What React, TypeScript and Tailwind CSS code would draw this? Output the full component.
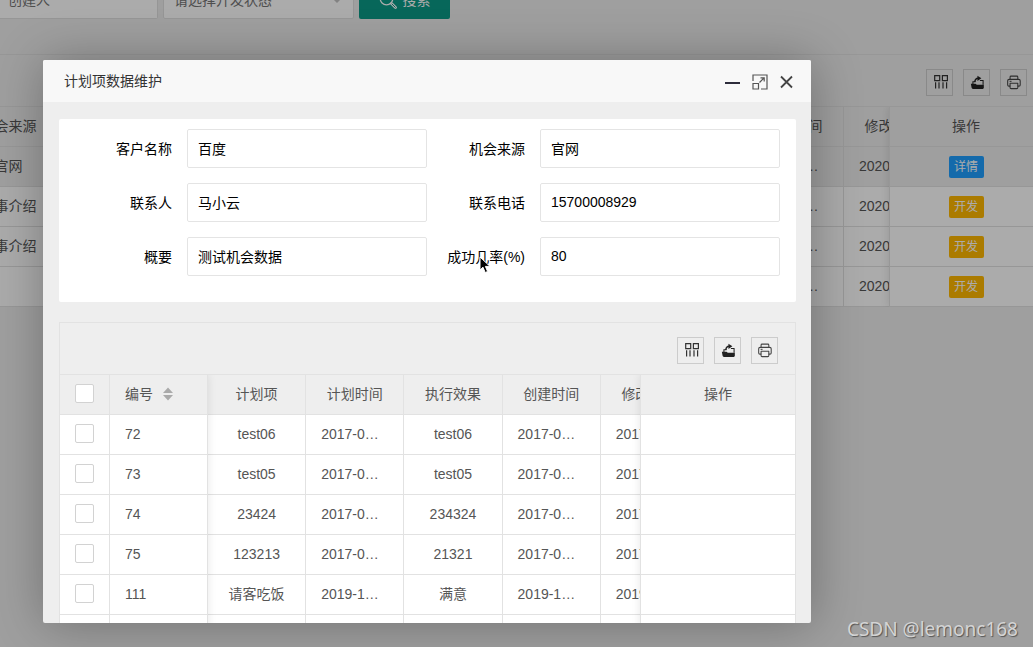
import React from "react";

const sans = "font-['Liberation_Sans','Noto_Sans_CJK_SC',sans-serif]";

function ColumnsIcon() {
  return (
    <svg className="size-4" viewBox="0 0 16 16" fill="none" stroke="#333" strokeWidth="1.2">
      <path d="M1.7 1.6h5v5h-5zM9.4 1.6h5v5h-5z" />
      <path d="M2.6 8.2v6.3M6 8.2v6.3M10 8.2v6.3M13.6 8.2v6.3" />
    </svg>
  );
}

function ExportIcon() {
  return (
    <svg className="size-4" viewBox="0.3 -0.9 17 17" fill="none" stroke="#222" strokeWidth="1.1">
      <path d="M3.4 10V7.4h2.800M10.800 6h3.400v4.500" />
      <path d="M5.400 7.600c.2-2.500 1.400-3.800 3.600-3.900" strokeWidth="1.5" />
      <path d="M8.2 0.900l4.200 2.800-4.200 2.800z" fill="#222" stroke="none" />
      <path d="M1.2 9.400h5l1.300 1.200h7.500v3.200q0 1.200-1.200 1.200H3.400q-1.200 0-1.400-1.200z" fill="#222" stroke="none" />
    </svg>
  );
}

function PrintIcon() {
  return (
    <svg className="size-4" viewBox="0.8 -0.6 16.6 16.6" fill="none" stroke="#444" strokeWidth="1.1" strokeLinejoin="round">
      <path d="M4 5V2.6q0-1 1-1h6q1 0 1 1V5" />
      <path d="M4 12H2.8Q1.500 12 1.500 10.700V6.500Q1.500 5 3 5h10q1.500 0 1.500 1.500v4.200q0 1.300-1.300 1.300H12" />
      <path d="M4 9h8v4.600q0 1-1 1H5q-1 0-1-1z" />
      <path d="M3.500 7h2" />
    </svg>
  );
}

function Toolbar() {
  const tools = [
    { label: "筛选列", icon: <ColumnsIcon /> },
    { label: "导出", icon: <ExportIcon /> },
    { label: "打印", icon: <PrintIcon /> },
  ];
  return (
    <div className="flex h-[51px] items-center justify-end gap-2.5 pr-[17px] pt-[3px]">
      {tools.map((t) => (
        <button key={t.label} aria-label={t.label} className="flex size-[27px] items-center justify-center border border-[#ccc] pl-0.5">
          {t.icon}
        </button>
      ))}
    </div>
  );
}

const cell = "h-10 overflow-hidden whitespace-nowrap border-b border-r border-[#e2e2e2] px-[15px] pb-0.5 font-normal";
const lastHead = "h-10 border-b border-[#e2e2e2] pb-0.5 font-normal";
const lastCell = "h-10 border-b border-[#e2e2e2]";
const tableBase = "table-fixed border-separate border-spacing-0 text-sm text-[#555]";

const opportunities = [
  { source: "官网", action: "详情" },
  { source: "同事介绍", action: "开发" },
  { source: "同事介绍", action: "开发" },
  { source: "", action: "开发" },
];

function OpportunityPage() {
  return (
    <div className="h-full overflow-hidden bg-[#eee]">
      <form className="flex h-[19px] items-end gap-[5px] overflow-hidden text-sm">
        <input aria-label="创建人" placeholder="创建人" className="h-[38px] w-[158px] shrink-0 rounded-r-xs border border-l-0 border-[#e0e0e0] bg-white px-2 placeholder:text-[#757575]" />
        <div className="flex h-[38px] w-[191px] shrink-0 items-center rounded-xs border border-[#e0e0e0] bg-white pr-2.5">
          <select aria-label="开发状态" className="h-full flex-1 appearance-none pl-2.5 text-[#757575]">
            <option>请选择开发状态</option>
          </select>
          <svg className="h-1.5 w-3" viewBox="0 0 12 6" fill="#c2c2c2"><path d="M0 0h12L6 6z" /></svg>
        </div>
        <button type="button" className="flex h-[38px] w-[91px] shrink-0 items-center justify-center gap-1.5 rounded-xs bg-[#0b9a86] text-white">
          <svg className="size-[18px]" viewBox="0 0 18 18" fill="none" stroke="currentColor">
            <circle cx="7.500" cy="7.500" r="6.300" strokeWidth="1.300" />
            <path d="M12.500 12.500l4 4" strokeWidth="2.800" strokeLinecap="round" />
            <path d="M13 13l3.300 3.300" stroke="#0b9a86" strokeLinecap="round" />
          </svg>
          搜索
        </button>
      </form>
      <section className="-mr-[11px] mt-[35px] border-t border-[#e2e2e2]">
        <Toolbar />
        <div className="flex overflow-hidden border-t border-[#e2e2e2]">
          <div className="min-w-0 flex-1 overflow-hidden">
            <table className={`${tableBase} -ml-[40px] w-[982px]`}>
              <colgroup>
                <col className="w-[98px]" />
                <col />
                <col className="w-[98px]" />
                <col className="w-[98px]" />
              </colgroup>
              <thead>
                <tr>
                  <th className={cell}>机会来源</th>
                  <th className={cell}></th>
                  <th className={cell}>创建时间</th>
                  <th className={cell}>修改时间</th>
                </tr>
              </thead>
              <tbody>
                {opportunities.map((o, i) => (
                  <tr key={i} className={i === 0 ? "" : "bg-white"}>
                    <td className={`${cell} text-center`}>{o.source}</td>
                    <td className={cell}></td>
                    <td className={cell}>2020-0…</td>
                    <td className={cell}>2020-0…</td>
                  </tr>
                ))}
              </tbody>
            </table>
          </div>
          <div className="w-[155px] shrink-0 border-l border-[#e2e2e2] bg-[#eee] pr-0.5 shadow-[-1px_0_8px_rgba(0,0,0,0.1)]">
            <table className={`${tableBase} w-full`}>
              <thead>
                <tr><th className={lastHead}>操作</th></tr>
              </thead>
              <tbody>
                {opportunities.map((o, i) => (
                  <tr key={i} className={i === 0 ? "" : "bg-white"}>
                    <td className={lastCell}>
                      <div className="flex justify-center">
                        <button className={`h-[22px] w-[35px] rounded-xs text-xs text-white ${o.action === "详情" ? "bg-[#1e9fff]" : "bg-[#ffb800]"}`}>{o.action}</button>
                      </div>
                    </td>
                  </tr>
                ))}
              </tbody>
            </table>
          </div>
        </div>
      </section>
    </div>
  );
}

const fields = [
  { id: "customer", label: "客户名称", value: "百度" },
  { id: "source", label: "机会来源", value: "官网" },
  { id: "contact", label: "联系人", value: "马小云" },
  { id: "phone", label: "联系电话", value: "15700008929" },
  { id: "summary", label: "概要", value: "测试机会数据" },
  { id: "rate", label: "成功几率(%)", value: "80" },
];

const plans = [
  { id: "72", item: "test06", time: "2017-0…", result: "test06", created: "2017-0…", updated: "2017-0…" },
  { id: "73", item: "test05", time: "2017-0…", result: "test05", created: "2017-0…", updated: "2017-0…" },
  { id: "74", item: "23424", time: "2017-0…", result: "234324", created: "2017-0…", updated: "2017-0…" },
  { id: "75", item: "123213", time: "2017-0…", result: "21321", created: "2017-0…", updated: "2017-0…" },
  { id: "111", item: "请客吃饭", time: "2019-1…", result: "满意", created: "2019-1…", updated: "2019-1…" },
  { id: "", item: "", time: "", result: "", created: "", updated: "" },
];

function Check({ label }: { label: string }) {
  return <input type="checkbox" aria-label={label} className="block size-[19px] appearance-none rounded-xs border border-[#d2d2d2] bg-white" />;
}

function PlanTable() {
  return (
    <section className="mt-5 border border-[#e2e2e2]">
      <Toolbar />
      <div className="flex overflow-hidden border-t border-[#e2e2e2]">
        <div className="relative w-[148px] shrink-0 bg-[#eee] shadow-[1px_0_8px_rgba(0,0,0,0.08)]">
          <table className={`${tableBase} w-full text-left`}>
            <colgroup>
              <col className="w-[50px]" />
              <col />
            </colgroup>
            <thead>
              <tr>
                <th className={cell}><Check label="全选" /></th>
                <th className={cell}>
                  <button className="flex items-center gap-2.5">
                    编号
                    <svg className="h-3.5 w-2.5" viewBox="0 0 10 14" fill="#aaa"><path d="M0 6l5-5.500L10 6zM0 8h10l-5 5.500z" /></svg>
                  </button>
                </th>
              </tr>
            </thead>
            <tbody className="bg-white">
              {plans.map((p, i) => (
                <tr key={i}>
                  <td className={cell}>{p.id && <Check label={p.id} />}</td>
                  <td className={cell}>{p.id}</td>
                </tr>
              ))}
            </tbody>
          </table>
        </div>
        <div className="min-w-0 flex-1 overflow-hidden">
          <table className={`${tableBase} w-[491px]`}>
            <thead>
              <tr>
                {["计划项", "计划时间", "执行效果", "创建时间", "修改时间"].map((h) => (
                  <th key={h} className={cell}>{h}</th>
                ))}
              </tr>
            </thead>
            <tbody className="bg-white">
              {plans.map((p, i) => (
                <tr key={i}>
                  <td className={`${cell} text-center`}>{p.item}</td>
                  <td className={cell}>{p.time}</td>
                  <td className={`${cell} text-center`}>{p.result}</td>
                  <td className={cell}>{p.created}</td>
                  <td className={cell}>{p.updated}</td>
                </tr>
              ))}
            </tbody>
          </table>
        </div>
        <div className="relative w-[155px] shrink-0 border-l border-[#e2e2e2] bg-[#eee] shadow-[-1px_0_8px_rgba(0,0,0,0.08)]">
          <table className={`${tableBase} w-full`}>
            <thead>
              <tr><th className={lastHead}>操作</th></tr>
            </thead>
            <tbody className="bg-white">
              {plans.map((p, i) => (
                <tr key={i}><td className={lastCell}></td></tr>
              ))}
            </tbody>
          </table>
        </div>
      </div>
    </section>
  );
}

function PlanDialog() {
  return (
    <div role="dialog" aria-labelledby="dialog-title" className="flex h-full flex-col overflow-hidden rounded-xs bg-[#eee] shadow-[1px_1px_50px_rgba(0,0,0,0.3)]">
      <header className="flex h-[43px] shrink-0 items-center border-b border-[#eee] bg-[#f8f8f8] pl-[21px] pr-4">
        <h2 id="dialog-title" className="flex-1 text-sm text-[#333]">计划项数据维护</h2>
        <div className="flex items-center gap-[11px] pt-0.5">
          <button aria-label="最小化">
            <svg className="block size-4" viewBox="0 0 16 16"><path d="M0 9h15" stroke="#2d2c3b" strokeWidth="2" /></svg>
          </button>
          <button aria-label="最大化">
            <svg className="block size-4" viewBox="0 0 16 16" fill="none" stroke="#555" strokeWidth="1.200">
              <path d="M1 7V1h14v14H9M1 9.500h5.500V15H1zM7.500 8.500l4.500-4.500M8.500 3.800h3.700v3.700" />
            </svg>
          </button>
          <button aria-label="关闭">
            <svg className="block size-4" viewBox="0 0 16 16"><path d="M2 2.500l11 11M13 2.500l-11 11" stroke="#444" strokeWidth="1.800" /></svg>
          </button>
        </div>
      </header>
      <div className="min-h-0 flex-1 overflow-hidden pl-4 pr-[15px] pt-4">
        <form className="grid grid-cols-2 gap-y-[15px] rounded-xs bg-white pb-[26px] pl-[15px] pr-4 pt-2.5 text-sm text-black">
          {fields.map((f) => (
            <div key={f.id} className="flex items-center">
              <label htmlFor={f.id} className="w-[113px] shrink-0 whitespace-nowrap pr-[15px] text-right">{f.label}</label>
              <input id={f.id} defaultValue={f.value} className="h-[39px] min-w-0 flex-1 rounded-xs border border-[#e4e4e4] bg-white px-2.5 pb-px" />
            </div>
          ))}
        </form>
        <PlanTable />
      </div>
    </div>
  );
}

export default function App() {
  return (
    <div className={`${sans} relative h-screen overflow-hidden`}>
      <OpportunityPage />
      <div className="absolute inset-0 bg-black/33 pb-[24px] pl-[43px] pr-[222px] pt-[60px]">
        <PlanDialog />
      </div>
      <svg className="absolute left-[479px] top-[256px] h-[18px] w-3" viewBox="0 0 12 18">
        <path d="M1 1v13l3-2.800 2.200 5.300 2.400-1L6.400 10.400H11z" fill="#000" stroke="#fff" />
      </svg>
      <p className="absolute bottom-1.5 right-[15px] font-['Noto_Sans',sans-serif] text-[19px] leading-6 text-[#d4d4d4] [text-shadow:1px_1px_1px_#555]">CSDN @lemonc168</p>
    </div>
  );
}
